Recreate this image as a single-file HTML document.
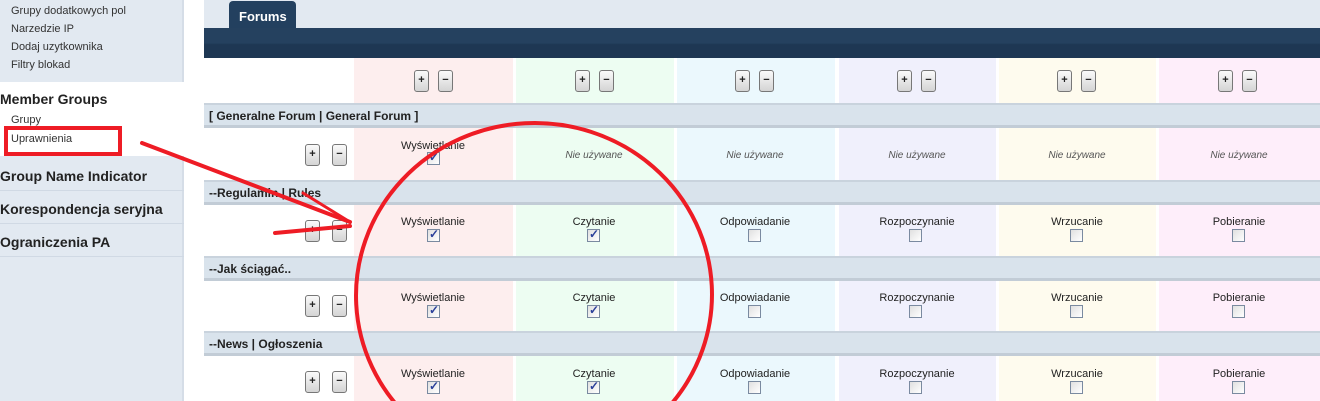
<!DOCTYPE html>
<html><head><meta charset="utf-8"><style>
*{margin:0;padding:0;box-sizing:border-box}
body{width:1320px;height:401px;overflow:hidden;background:#fff;font-family:"Liberation Sans",Arial,sans-serif;position:relative;color:#222}
.a{position:absolute}
.side{left:0;top:0;width:184px;height:401px;background:#e2e9f1;border-right:2px solid #d5dde7}
.si{font-size:11px;color:#333;left:11px}
.sh{font-size:14px;font-weight:bold;color:#222;left:0}
.sep{left:0;width:184px;height:1px;background:#d0d9e4}
.col{top:58px;height:343px}
.bar{left:204px;width:1116px;height:25px;background:#d9e3ec;border-top:2px solid #c9d3dd;border-bottom:3px solid #c2ccd6;font-size:12px;font-weight:bold;color:#222;padding:4px 0 0 5px}
.btn{width:15px;height:22px;border:1px solid #777;border-radius:3px;background:linear-gradient(#fafafa,#d4d4d4);font-size:11px;text-align:center;line-height:19px;font-weight:bold}
.lbl{font-size:11px;color:#222;text-align:center;width:160px}
.nu{font-size:10px;color:#555;font-style:italic;text-align:center;width:160px}
.cb{width:13px;height:13px;border:1px solid #7a8aa0;background:linear-gradient(135deg,#e0e0e0,#fff)}
.cb.c::after{content:"✓";position:absolute;left:1px;top:-3px;font-size:12px;color:#2a3f9a;font-weight:bold}
</style></head><body>
<div class="a side"></div>
<div class="a si" style="top:5px">Grupy dodatkowych pol</div>
<div class="a si" style="top:23px">Narzedzie IP</div>
<div class="a si" style="top:41px">Dodaj uzytkownika</div>
<div class="a si" style="top:59px">Filtry blokad</div>
<div class="a" style="left:0;top:82px;width:184px;height:74px;background:#fff"></div>
<div class="a sh" style="top:91px">Member Groups</div>
<div class="a si" style="top:114px">Grupy</div>
<div class="a si" style="top:133px">Uprawnienia</div>
<div class="a sh" style="top:168px">Group Name Indicator</div>
<div class="a sep" style="top:190px"></div>
<div class="a sh" style="top:201px">Korespondencja seryjna</div>
<div class="a sep" style="top:223px"></div>
<div class="a sh" style="top:234px">Ograniczenia PA</div>
<div class="a sep" style="top:256px"></div>

<div class="a" style="left:204px;top:0;width:1116px;height:28px;background:#e2e9f1"></div>
<div class="a" style="left:229px;top:1px;width:67px;height:28px;background:#23405f;border-radius:4px 4px 0 0;color:#fff;font-weight:bold;font-size:13px;padding:8px 0 0 10px">Forums</div>
<div class="a" style="left:204px;top:28px;width:1116px;height:30px;background:linear-gradient(#25415f 0,#25415f 50%,#1e3753 55%,#1e3753 100%)"></div>

<div class="a col" style="left:354px;width:159px;background:#fdeeee"></div>
<div class="a col" style="left:516px;width:158px;background:#edfdf2"></div>
<div class="a col" style="left:677px;width:158px;background:#ebf8fd"></div>
<div class="a col" style="left:839px;width:157px;background:#f0f0fc"></div>
<div class="a col" style="left:999px;width:157px;background:#fefbee"></div>
<div class="a col" style="left:1159px;width:161px;background:#feeefa"></div>

<!-- header buttons -->
<div class="a btn" style="left:414px;top:70px">+</div><div class="a btn" style="left:438px;top:70px">−</div>
<div class="a btn" style="left:575px;top:70px">+</div><div class="a btn" style="left:599px;top:70px">−</div>
<div class="a btn" style="left:735px;top:70px">+</div><div class="a btn" style="left:759px;top:70px">−</div>
<div class="a btn" style="left:897px;top:70px">+</div><div class="a btn" style="left:921px;top:70px">−</div>
<div class="a btn" style="left:1057px;top:70px">+</div><div class="a btn" style="left:1081px;top:70px">−</div>
<div class="a btn" style="left:1218px;top:70px">+</div><div class="a btn" style="left:1242px;top:70px">−</div>

<div class="a bar" style="top:103px">[ Generalne Forum | General Forum ]</div>
<div class="a btn" style="left:305px;top:144px">+</div><div class="a btn" style="left:332px;top:144px">−</div>
<div class="a lbl" style="left:353px;top:140px">Wyświetlanie</div><div class="a cb c" style="left:427px;top:152px"></div>
<div class="a nu" style="left:514px;top:150px">Nie używane</div>
<div class="a nu" style="left:675px;top:150px">Nie używane</div>
<div class="a nu" style="left:837px;top:150px">Nie używane</div>
<div class="a nu" style="left:997px;top:150px">Nie używane</div>
<div class="a nu" style="left:1159px;top:150px">Nie używane</div>

<div class="a bar" style="top:180px">--Regulamin | Rules</div>
<div class="a btn" style="left:305px;top:220px">+</div><div class="a btn" style="left:332px;top:220px">−</div>
<div class="a lbl" style="left:353px;top:216px">Wyświetlanie</div><div class="a cb c" style="left:427px;top:229px"></div>
<div class="a lbl" style="left:514px;top:216px">Czytanie</div><div class="a cb c" style="left:587px;top:229px"></div>
<div class="a lbl" style="left:675px;top:216px">Odpowiadanie</div><div class="a cb" style="left:748px;top:229px"></div>
<div class="a lbl" style="left:837px;top:216px">Rozpoczynanie</div><div class="a cb" style="left:909px;top:229px"></div>
<div class="a lbl" style="left:997px;top:216px">Wrzucanie</div><div class="a cb" style="left:1070px;top:229px"></div>
<div class="a lbl" style="left:1159px;top:216px">Pobieranie</div><div class="a cb" style="left:1232px;top:229px"></div>

<div class="a bar" style="top:256px">--Jak ściągać..</div>
<div class="a btn" style="left:305px;top:295px">+</div><div class="a btn" style="left:332px;top:295px">−</div>
<div class="a lbl" style="left:353px;top:292px">Wyświetlanie</div><div class="a cb c" style="left:427px;top:305px"></div>
<div class="a lbl" style="left:514px;top:292px">Czytanie</div><div class="a cb c" style="left:587px;top:305px"></div>
<div class="a lbl" style="left:675px;top:292px">Odpowiadanie</div><div class="a cb" style="left:748px;top:305px"></div>
<div class="a lbl" style="left:837px;top:292px">Rozpoczynanie</div><div class="a cb" style="left:909px;top:305px"></div>
<div class="a lbl" style="left:997px;top:292px">Wrzucanie</div><div class="a cb" style="left:1070px;top:305px"></div>
<div class="a lbl" style="left:1159px;top:292px">Pobieranie</div><div class="a cb" style="left:1232px;top:305px"></div>

<div class="a bar" style="top:331px">--News | Ogłoszenia</div>
<div class="a btn" style="left:305px;top:371px">+</div><div class="a btn" style="left:332px;top:371px">−</div>
<div class="a lbl" style="left:353px;top:368px">Wyświetlanie</div><div class="a cb c" style="left:427px;top:381px"></div>
<div class="a lbl" style="left:514px;top:368px">Czytanie</div><div class="a cb c" style="left:587px;top:381px"></div>
<div class="a lbl" style="left:675px;top:368px">Odpowiadanie</div><div class="a cb" style="left:748px;top:381px"></div>
<div class="a lbl" style="left:837px;top:368px">Rozpoczynanie</div><div class="a cb" style="left:909px;top:381px"></div>
<div class="a lbl" style="left:997px;top:368px">Wrzucanie</div><div class="a cb" style="left:1070px;top:381px"></div>
<div class="a lbl" style="left:1159px;top:368px">Pobieranie</div><div class="a cb" style="left:1232px;top:381px"></div>

<svg class="a" style="left:0;top:0" width="1320" height="401">
<g fill="none" stroke="#ee1c25" stroke-linecap="round">
<rect x="6" y="128" width="114" height="26" stroke-width="4" stroke-linecap="butt"/>
<path d="M142 143 L350 222" stroke-width="4"/>
<path d="M303 193 L350 222" stroke-width="3"/>
<path d="M275 233 L350 226" stroke-width="4"/>
<ellipse cx="534" cy="295" rx="178" ry="172" stroke-width="4" transform="rotate(-3 534 295)"/>
</g></svg>
</body></html>
